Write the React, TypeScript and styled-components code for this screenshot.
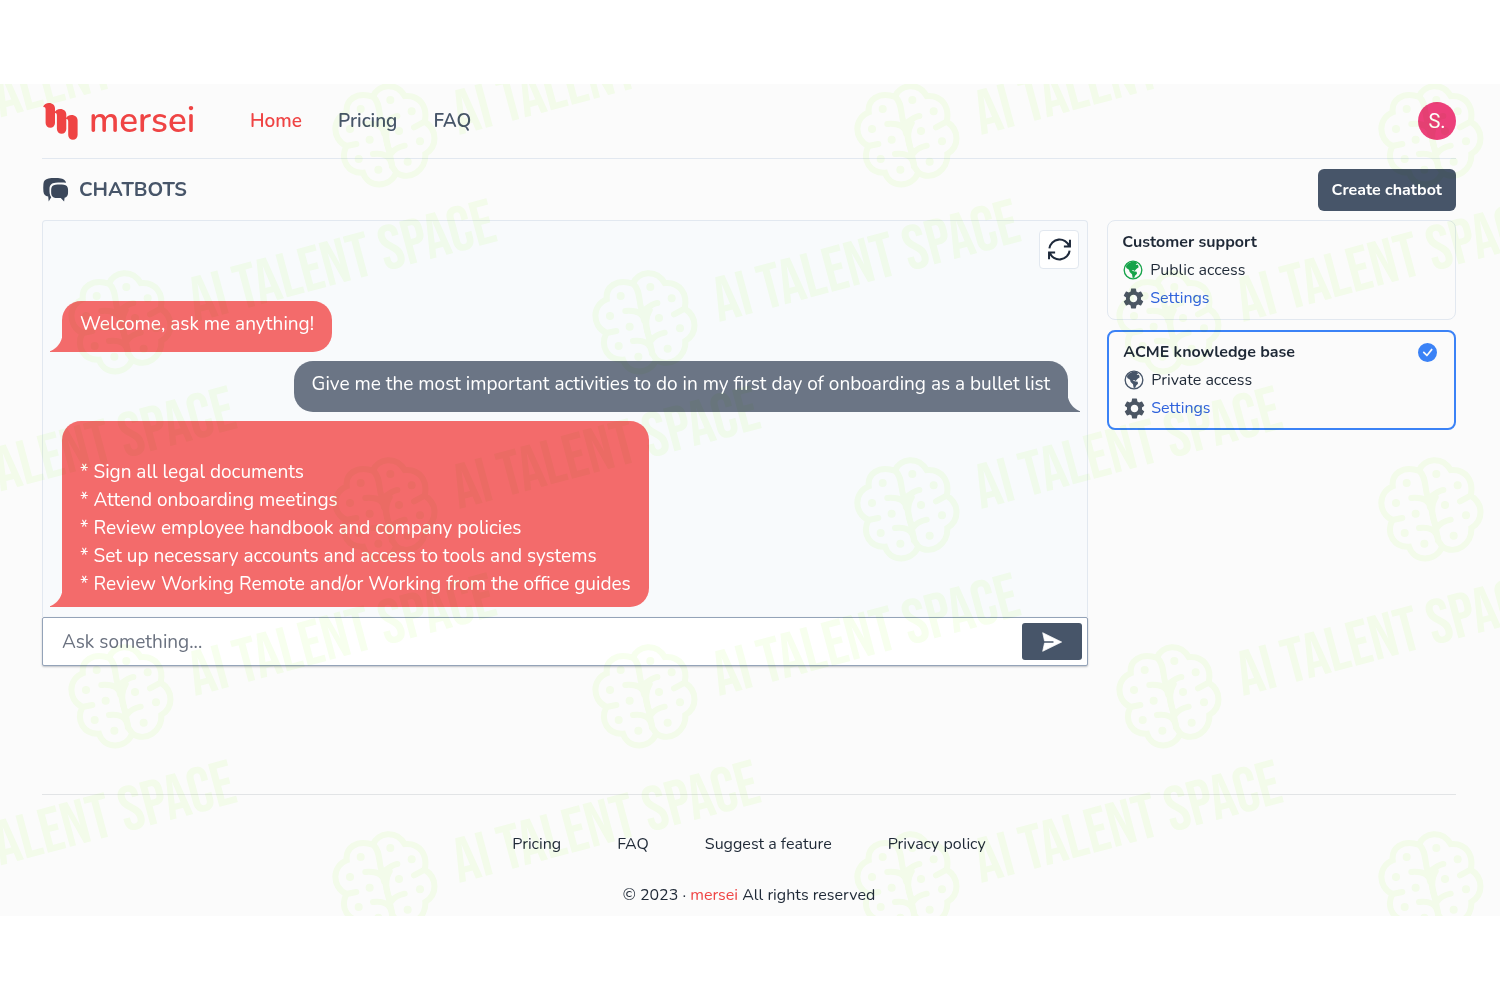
import React, { useState } from "react";
import styled, { createGlobalStyle } from "styled-components";
import { MdSettings } from "react-icons/md";
import { BsCheckCircleFill } from "react-icons/bs";

const color = {
  page: "#fbfbfb",
  line: "#e2e8f0",
  slate: "#475569",
  ink: "#1f2937",
  red: "#ef4444",
  coral: "#f36b6b",
  steel: "#6b7585",
  blue: "#3b82f6",
  link: "#2f62dc",
};

const GlobalStyle = createGlobalStyle`
  *, *::before, *::after { box-sizing: border-box; }
  body {
    margin: 0;
    background: #fff;
    color: ${color.ink};
    font-family: Nunito, Lato, "Open Sans", sans-serif;
    font-size: 16px;
    line-height: 28px;
  }
  button, input { font: inherit; }
  h1, h2, p, ul { margin: 0; padding: 0; }
  a { color: inherit; text-decoration: none; }
  ul { list-style: none; }
`;

const Frame = styled.div`
  padding: 84px 0;
`;

const Page = styled.div`
  position: relative;
  overflow: hidden;
  background: ${color.page};
  padding: 0 44px 7px 42px;
`;

const Header = styled.header`
  display: flex;
  align-items: center;
  height: 75px;
  border-bottom: 1px solid ${color.line};
`;

const Brand = styled.a`
  display: flex;
  align-items: center;
  gap: 11px;
  width: 208px;
  padding-left: 1px;
  color: ${color.red};
  font-size: 35px;
  font-weight: 600;
`;

const Nav = styled.nav`
  display: flex;
  flex: 1;
  gap: 36px;
`;

const NavLink = styled.a<{ $active?: boolean }>`
  color: ${(p) => (p.$active ? color.red : color.slate)};
  font-size: 19px;
  font-weight: 600;
`;

const Avatar = styled.button`
  width: 38px;
  height: 38px;
  padding: 0;
  border: 0;
  border-radius: 50%;
  background: #ec407a;
  color: #fff;
  font-family: Roboto, sans-serif;
  font-size: 20px;
`;

const TitleRow = styled.div`
  display: flex;
  align-items: center;
  justify-content: space-between;
  padding: 10px 0 9px;
`;

const Title = styled.h1`
  display: flex;
  align-items: center;
  gap: 10px;
  color: ${color.slate};
  font-size: 20px;
  font-weight: 700;
  line-height: 28px;
`;

const CreateButton = styled.button`
  padding: 7px 14px;
  border: 0;
  border-radius: 6px;
  background: ${color.slate};
  color: #fff;
  font-weight: 700;
`;

const Columns = styled.main`
  display: grid;
  grid-template-columns: 3fr 1fr;
  align-items: start;
  gap: 19px;
`;

const Conversation = styled.div`
  display: flex;
  flex-direction: column;
  padding: 9px 8px 10px;
  border: 1px solid ${color.line};
  border-bottom: 0;
  border-radius: 4px 4px 0 0;
  background: #f8fafc;
`;

const ReloadButton = styled.button`
  display: grid;
  place-items: center;
  align-self: flex-end;
  width: 40px;
  height: 39px;
  padding: 0;
  border: 1px solid ${color.line};
  border-radius: 4px;
  background: #fff;
  color: #1e293b;
`;

const Messages = styled.div`
  display: flex;
  flex-direction: column;
  align-items: flex-start;
  gap: 9px;
  padding: 32px 11px 0;
`;

const Bubble = styled.div<{ $own?: boolean }>`
  --fill: ${(p) => (p.$own ? color.steel : color.coral)};
  position: relative;
  align-self: ${(p) => (p.$own ? "flex-end" : "flex-start")};
  min-height: 51px;
  padding: 9px 18px;
  border-radius: ${(p) => (p.$own ? "19px 19px 0 19px" : "19px 19px 19px 0")};
  background: var(--fill);
  color: #fff;
  font-size: 19px;
  line-height: 28px;
  white-space: pre-line;

  &::after {
    content: "";
    position: absolute;
    bottom: 0;
    ${(p) => (p.$own ? "left: 100%;" : "right: 100%;")}
    width: 12px;
    height: 14px;
    background: radial-gradient(
      circle at ${(p) => (p.$own ? "19px" : "-7px")} -5px,
      transparent 19px,
      var(--fill) 20px
    );
  }
`;

const Composer = styled.form`
  display: flex;
  align-items: center;
  padding: 5px;
  border: 1px solid #94a3b8;
  border-radius: 2px;
  background: #fff;
  box-shadow: 0 1px 2px rgba(15, 23, 42, 0.25);
`;

const Question = styled.input`
  flex: 1;
  min-width: 0;
  height: 37px;
  padding: 0 14px;
  border: 0;
  outline: 0;
  background: transparent;
  font-size: 19px;

  &::placeholder {
    color: #6b7280;
    opacity: 1;
  }
`;

const SendButton = styled.button`
  display: grid;
  place-items: center;
  width: 60px;
  height: 37px;
  padding: 0;
  border: 0;
  border-radius: 3px;
  background: ${color.slate};
  color: #fff;
`;

const BotList = styled.ul`
  display: grid;
  gap: 10px;
`;

const BotCard = styled.li<{ $selected?: boolean }>`
  padding: ${(p) => (p.$selected ? "6px 14px" : "7px 14px")};
  border: ${(p) => (p.$selected ? `2px solid ${color.blue}` : `1px solid ${color.line}`)};
  border-radius: 8px;
`;

const BotHead = styled.div`
  display: flex;
  align-items: center;
  justify-content: space-between;
  padding-right: 3px;
  svg { color: ${color.blue}; }
`;

const BotName = styled.h2`
  font-size: 16px;
  font-weight: 700;
  line-height: 28px;
`;

const BotLine = styled.div`
  display: flex;
  align-items: center;
  gap: 6px;
  a { color: ${color.link}; }
`;

const IconSlot = styled.span<{ $tint: string }>`
  display: flex;
  justify-content: center;
  width: 22px;
  color: ${(p) => p.$tint};
  svg { flex: none; }
`;

const Footer = styled.footer`
  margin-top: 128px;
  padding-top: 35px;
  border-top: 1px solid #e2e4e6;
  text-align: center;
`;

const FooterLinks = styled.nav`
  display: flex;
  justify-content: center;
  gap: 56px;
  margin-bottom: 23px;
`;

const Accent = styled.a`
  color: ${color.red};
`;

const Watermark = styled.svg`
  position: absolute;
  inset: 0;
  width: 100%;
  height: 100%;
  pointer-events: none;
  user-select: none;
  mix-blend-mode: multiply;
  opacity: 0.1;
  color: #a8ff50;
  font-family: "Bebas Neue", Roboto, sans-serif;
  font-size: 63px;
`;

const LogoMark = () => (
  <svg width="35" height="37" viewBox="0 0 35 37" fill="currentColor" aria-hidden="true">
    {[0, 1, 2].map((i) => (
      <path
        key={i}
        transform={`translate(${i * 11.3} ${i * 6})`}
        d="M0 4.200C1 1.200 3.300 0 6 0c3.500 0 6 2.300 6 5.500v14.600a4.700 4.700 0 0 1-9.400 0V6.400C2.600 4.300 1.400 3.500 0 4.200z"
      />
    ))}
  </svg>
);

const ChatsIcon = () => (
  <svg width="27" height="26" viewBox="0 0 27 26" fill="#3b475a" aria-hidden="true">
    <path d="M6.500 1.500C10 .9 15.500.9 19 1.500c2.900.5 4.600 1.900 5.100 4.300-3.200-.4-7.400-.4-10.600 0C9.500 6.200 7.700 8 7.500 11.500c-.1 2 0 3.500.2 5 .2 1.500.7 2.700 1.500 3.700L6.700 24.500 6.200 19.600C3.300 19.100 1.700 17.300 1.400 14.500c-.2-2.500-.2-5 0-7.500C1.700 3.800 3.300 2.100 6.500 1.500z" />
    <path d="M13.500 7.700c2.600-.4 5.800-.4 8.300 0 2.700.4 4 1.800 4.200 4.300.1 1.600.1 3 0 4.500-.2 2.400-1.300 3.800-3.400 4.200l-.5 3.800-3.300-3.500c-1.700.1-3.700.1-5.300-.1-2.700-.3-4.100-1.700-4.300-4.400-.1-1.600-.1-3 0-4.500.2-2.500 1.600-3.900 4.300-4.300z" />
  </svg>
);

const ReloadIcon = () => (
  <svg width="27" height="27" viewBox="0 0 80 80" fill="none" stroke="currentColor" strokeWidth="6" aria-hidden="true">
    <path d="M10 37A30.500 30.500 0 0 1 69 31M53 31H71V11" />
    <path d="M70 43A30.500 30.500 0 0 1 11 49M27 49H9V69" />
  </svg>
);

const SendIcon = () => (
  <svg width="20" height="20" viewBox="0 0 60 60" aria-hidden="true">
    <path fill="currentColor" stroke="currentColor" strokeWidth="2" strokeLinejoin="round" d="M2 2L59 30L2 58L8 31V29Z" />
    <path stroke={color.slate} strokeWidth="4" strokeLinecap="round" d="M3 30H33" />
  </svg>
);

const GlobeIcon = () => (
  <svg width="20" height="20" viewBox="0 0 60 60" aria-hidden="true">
    <circle cx="30" cy="30" r="26.500" fill="none" stroke="currentColor" strokeWidth="4" />
    <path
      fill="currentColor"
      d="M9 18C17 7 27 4 37 5L43 9L38 15L45 14L47 22L40 27L35 33L30 30L26 31L32 34L41 35L42 41L36 47L34 53L29 54L27 43L20 36L18 29L10 24Z"
    />
  </svg>
);

const nodes = [
  [98, 127], [66, 187], [125, 219], [92, 277], [151, 309],
  [187, 100], [251, 134], [213, 193], [276, 224], [239, 285],
];

const marks = [-139, 385, 907, 1431].flatMap((x) => [51, 425, 799].map((y) => [x, y]))
  .concat([121, 645, 1169].flatMap((x) => [238, 612].map((y) => [x, y])));

const WatermarkLayer = () => (
  <Watermark aria-hidden="true">
    {marks.map(([x, y]) => (
      <g key={`${x}-${y}`} transform={`translate(${x} ${y})`}>
        <g transform="scale(.3333) translate(-171 -205)" fill="none" stroke="currentColor" strokeWidth="18" strokeLinecap="round">
          <path d="M56 137C52 100 85 74 135 90C150 52 205 45 230 88C275 84 300 120 290 165C330 190 328 240 292 262C295 310 245 345 205 318C185 365 120 365 105 318C60 320 35 280 55 238C10 215 12 155 56 137Z" />
          <path d="M135 90C160 110 150 150 165 180C175 215 185 260 193 300L205 318" />
          <path d="M112 172C140 170 165 175 168 200M55 238L85 232M165 170C180 165 190 150 208 148M186 255C170 225 172 190 185 170M188 262C200 245 215 240 230 237M135 262C160 258 190 265 192 300M258 182L290 165" />
          {nodes.map(([cx, cy]) => (
            <circle key={`${cx}-${cy}`} cx={cx} cy={cy} r="12" fill="currentColor" stroke="none" />
          ))}
        </g>
        {x < 1400 && (
          <text x="74" y="0" fill="currentColor" transform="rotate(-15 74 0)">AI TALENT SPACE</text>
        )}
      </g>
    ))}
  </Watermark>
);

const bots = [
  { name: "Customer support", access: "Public access", tint: "#16a34a", selected: false },
  { name: "ACME knowledge base", access: "Private access", tint: color.slate, selected: true },
];

const answer = `
* Sign all legal documents
* Attend onboarding meetings
* Review employee handbook and company policies
* Set up necessary accounts and access to tools and systems
* Review Working Remote and/or Working from the office guides`;

export default function App() {
  const [question, setQuestion] = useState("");
  return (
    <Frame>
      <GlobalStyle />
      <Page>
        <Header>
          <Brand href="#"><LogoMark />mersei</Brand>
          <Nav aria-label="Main">
            <NavLink href="#" $active>Home</NavLink>
            <NavLink href="#">Pricing</NavLink>
            <NavLink href="#">FAQ</NavLink>
          </Nav>
          <Avatar type="button">S.</Avatar>
        </Header>
        <TitleRow>
          <Title><ChatsIcon />CHATBOTS</Title>
          <CreateButton type="button">Create chatbot</CreateButton>
        </TitleRow>
        <Columns>
          <section>
            <Conversation>
              <ReloadButton type="button" aria-label="Restart conversation"><ReloadIcon /></ReloadButton>
              <Messages>
                <Bubble>Welcome, ask me anything!</Bubble>
                <Bubble $own>Give me the most important activities to do in my first day of onboarding as a bullet list</Bubble>
                <Bubble>{answer}</Bubble>
              </Messages>
            </Conversation>
            <Composer onSubmit={(e) => e.preventDefault()}>
              <Question
                aria-label="Ask something"
                placeholder="Ask something..."
                value={question}
                onChange={(e) => setQuestion(e.target.value)}
              />
              <SendButton type="submit" aria-label="Send"><SendIcon /></SendButton>
            </Composer>
          </section>
          <BotList>
            {bots.map((bot) => (
              <BotCard key={bot.name} $selected={bot.selected}>
                <BotHead>
                  <BotName>{bot.name}</BotName>
                  {bot.selected && <BsCheckCircleFill size={19} />}
                </BotHead>
                <BotLine>
                  <IconSlot $tint={bot.tint}><GlobeIcon /></IconSlot>
                  {bot.access}
                </BotLine>
                <BotLine>
                  <IconSlot $tint="#4b5563"><MdSettings size={25} /></IconSlot>
                  <a href="#">Settings</a>
                </BotLine>
              </BotCard>
            ))}
          </BotList>
        </Columns>
        <Footer>
          <FooterLinks aria-label="Footer">
            <a href="#">Pricing</a>
            <a href="#">FAQ</a>
            <a href="#">Suggest a feature</a>
            <a href="#">Privacy policy</a>
          </FooterLinks>
          <p>© 2023 · <Accent href="#">mersei</Accent> All rights reserved</p>
        </Footer>
        <WatermarkLayer />
      </Page>
    </Frame>
  );
}
